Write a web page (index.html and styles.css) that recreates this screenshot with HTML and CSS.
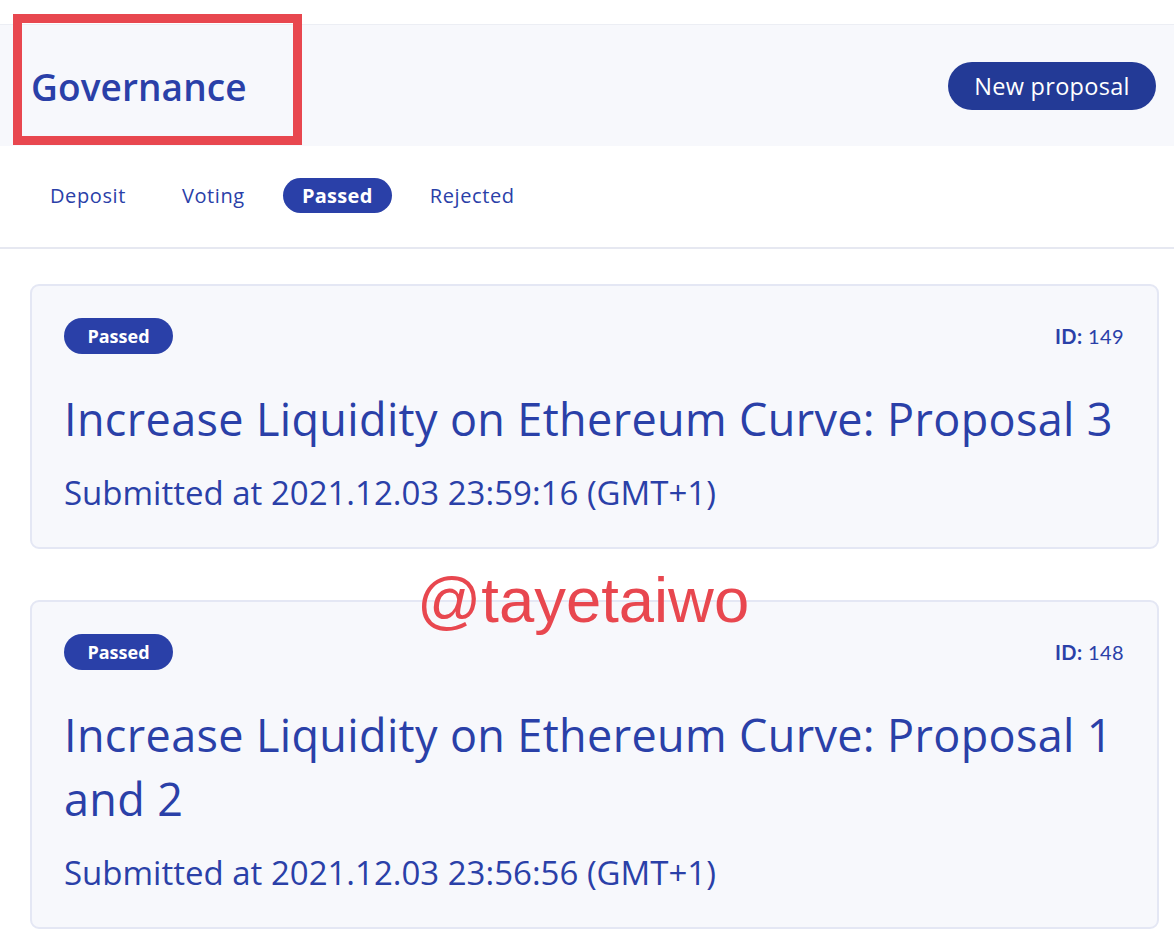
FILE: index.html
```html
<!DOCTYPE html>
<html>
<head>
<meta charset="utf-8">
<link rel="stylesheet" href="styles.css">
</head>
<body>
<div class="page">
  <header class="header">
    <h1 class="title">Governance</h1>
    <button class="new-btn">New proposal</button>
    <div class="highlight"></div>
  </header>
  <nav class="tabs">
    <span class="tab">Deposit</span>
    <span class="tab">Voting</span>
    <span class="tab active">Passed</span>
    <span class="tab">Rejected</span>
  </nav>
  <main class="list">
    <div class="watermark">@tayetaiwo</div>
    <article class="card">
      <div class="card-top">
        <span class="badge">Passed</span>
        <span class="id"><b>ID:</b> 149</span>
      </div>
      <h2 class="card-title">Increase Liquidity on Ethereum Curve: Proposal 3</h2>
      <p class="submitted">Submitted at 2021.12.03 23:59:16 (GMT+1)</p>
    </article>
    <article class="card">
      <div class="card-top">
        <span class="badge">Passed</span>
        <span class="id"><b>ID:</b> 148</span>
      </div>
      <h2 class="card-title">Increase Liquidity on Ethereum Curve: Proposal 1 and 2</h2>
      <p class="submitted">Submitted at 2021.12.03 23:56:56 (GMT+1)</p>
    </article>
  </main>
</div>
</body>
</html>
```
FILE: styles.css
```css
* { box-sizing: border-box; }
html, body { margin: 0; padding: 0; background: #fff; }
body { font-family: "Open Sans", "Noto Sans", sans-serif; color: #2a40a8; }
.page { width: 1174px; padding-top: 24px; }
.header {
  position: relative;
  height: 122px;
  background: #f7f8fc;
  border-top: 1px solid #eceef4;
  display: flex;
  align-items: center;
  justify-content: space-between;
  padding: 0 18px 0 31px;
}
.title {
  margin: 0;
  font-size: 37px;
  font-weight: 600;
  color: #2a40a8;
  letter-spacing: 0.1px;
  padding-top: 2px;
}
.new-btn {
  height: 48px;
  width: 208px;
  border: none;
  border-radius: 24px;
  background: #233a96;
  color: #fff;
  font-family: "Open Sans", sans-serif;
  font-size: 23.5px;
  font-weight: 400;
  letter-spacing: 0.3px;
  padding: 0;
}
.highlight {
  position: absolute;
  left: 13px;
  top: -11px;
  width: 289px;
  height: 131px;
  border: 9px solid #e8474f;
}
.tabs {
  height: 103px;
  display: flex;
  align-items: center;
  padding-left: 32px;
  border-bottom: 2px solid #e6e8f1;
  gap: 20px;
  padding-bottom: 2px;
}
.tab {
  font-size: 20px;
  color: #2a40a8;
  padding: 4px 18px;
  letter-spacing: 0.6px;
}
.tab.active {
  background: #2a40a8;
  color: #fff;
  font-weight: 700;
  border-radius: 18px;
  height: 35px;
  width: 109px;
  display: inline-flex;
  align-items: center;
  justify-content: center;
  padding: 0;
  letter-spacing: 0.3px;
}
.list {
  position: relative;
  padding: 35px 15px 0 30px;
  display: flex;
  flex-direction: column;
  gap: 51px;
}
.card {
  background: #f7f8fc;
  border: 2px solid #e4e7f4;
  border-radius: 9px;
  padding: 32px 33px 34px 32px;
}
.card-top {
  display: flex;
  justify-content: space-between;
  align-items: center;
}
.badge {
  height: 36px;
  width: 109px;
  border-radius: 18px;
  background: #2a40a8;
  color: #fff;
  font-weight: 700;
  font-size: 18px;
  display: inline-flex;
  align-items: center;
  justify-content: center;
}
.id {
  font-family: "Lato", sans-serif;
  font-size: 20px;
  color: #2a40a8;
  letter-spacing: 0.4px;
}
.id b { font-weight: 700; }
.card-title {
  margin: 33px 0 0 0;
  font-size: 45px;
  font-weight: 400;
  line-height: 64px;
  letter-spacing: 0.35px;
  color: #2a40a8;
}
.submitted {
  margin: 22px 0 0 0;
  font-size: 33px;
  line-height: 40px;
  color: #2a40a8;
}
.watermark {
  position: absolute;
  left: 417px;
  top: 315px;
  font-family: "Liberation Sans", Arial, sans-serif;
  font-size: 63.4px;
  color: #e8474f;
  z-index: 2;
  line-height: 72px;
}
```
